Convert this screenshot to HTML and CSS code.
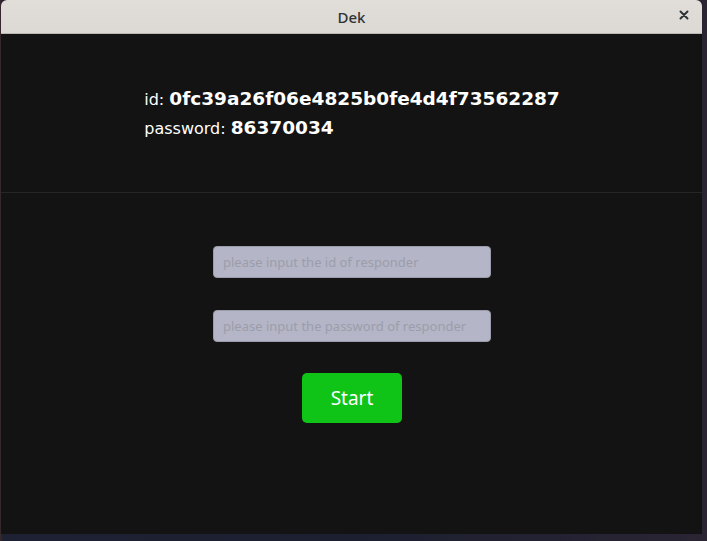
FILE: index.html
```html
<!DOCTYPE html>
<html>
<head>
<meta charset="utf-8">
<title>Dek</title>
<link rel="stylesheet" href="styles.css">
</head>
<body>
<div class="desktop">
  <div class="window">
    <div class="titlebar">
      <span class="title">Dek</span>
      <span class="close">
        <svg width="10" height="10" viewBox="0 0 10 10"><path d="M1.5 1.5 L8.5 8.5 M8.5 1.5 L1.5 8.5" stroke="#2e3436" stroke-width="2" stroke-linecap="round"/></svg>
      </span>
    </div>
    <div class="content">
      <div class="info">
        <div class="info-block">
          <div class="line">id: <b>0fc39a26f06e4825b0fe4d4f73562287</b></div>
          <div class="line">password: <b>86370034</b></div>
        </div>
      </div>
      <div class="form">
        <input class="field" type="text" placeholder="please input the id of responder">
        <input class="field" type="text" placeholder="please input the password of responder">
        <button class="start">Start</button>
      </div>
    </div>
  </div>
</div>
</body>
</html>
```
FILE: styles.css
```css
html, body {
  margin: 0;
  padding: 0;
}
body {
  width: 707px;
  height: 541px;
  overflow: hidden;
  background: linear-gradient(90deg, #3a2a2c 0px, #1d2133 3px, #1b1f30 50%, #2a2433 100%);
}
.desktop {
  padding-left: 1px;
  height: 541px;
}
.window {
  width: 701px;
  height: 534px;
  display: flex;
  flex-direction: column;
  background: #131313;
  border-radius: 6px 6px 0 0;
  overflow: hidden;
}
.titlebar {
  height: 33px;
  flex: none;
  background: linear-gradient(#e1deda, #dcd9d5);
  border-bottom: 1px solid #b9b5b0;
  display: flex;
  align-items: center;
  justify-content: center;
  position: relative;
}
.title {
  font-family: "Noto Sans", sans-serif;
  font-size: 15px;
  font-weight: 500;
  color: #2e3436;
}
.close {
  position: absolute;
  right: 13px;
  top: 10px;
  width: 10px;
  height: 10px;
  display: flex;
}
.content {
  flex: 1;
  display: flex;
  flex-direction: column;
}
.info {
  height: 158px;
  border-bottom: 1px solid #262626;
  display: flex;
  align-items: center;
  justify-content: center;
}
.info-block {
  font-family: "DejaVu Sans", sans-serif;
  color: #ffffff;
  font-size: 16px;
  margin-top: -1px;
  margin-left: 1px;
}
.line {
  height: 29px;
  line-height: 29px;
}
.line b {
  font-size: 18.5px;
  font-weight: bold;
}
.form {
  display: flex;
  flex-direction: column;
  align-items: center;
  padding-top: 53px;
  padding-left: 1px;
}
.field {
  width: 278px;
  height: 32px;
  box-sizing: border-box;
  border: 1px solid #9a9bab;
  border-radius: 4px;
  background: #b4b5c6;
  padding: 0 9px;
  font-family: "Noto Sans", sans-serif;
  font-size: 13px;
  color: #333;
  outline: none;
  margin-bottom: 32px;
}
.field::placeholder {
  color: #9c9dab;
}
.field + .field {
  margin-bottom: 31px;
}
.start {
  width: 100px;
  height: 50px;
  border: none;
  border-radius: 5px;
  background: #10c417;
  color: #ffffff;
  font-family: "Noto Sans", sans-serif;
  font-size: 19px;
  padding: 0;
  cursor: pointer;
}
```
